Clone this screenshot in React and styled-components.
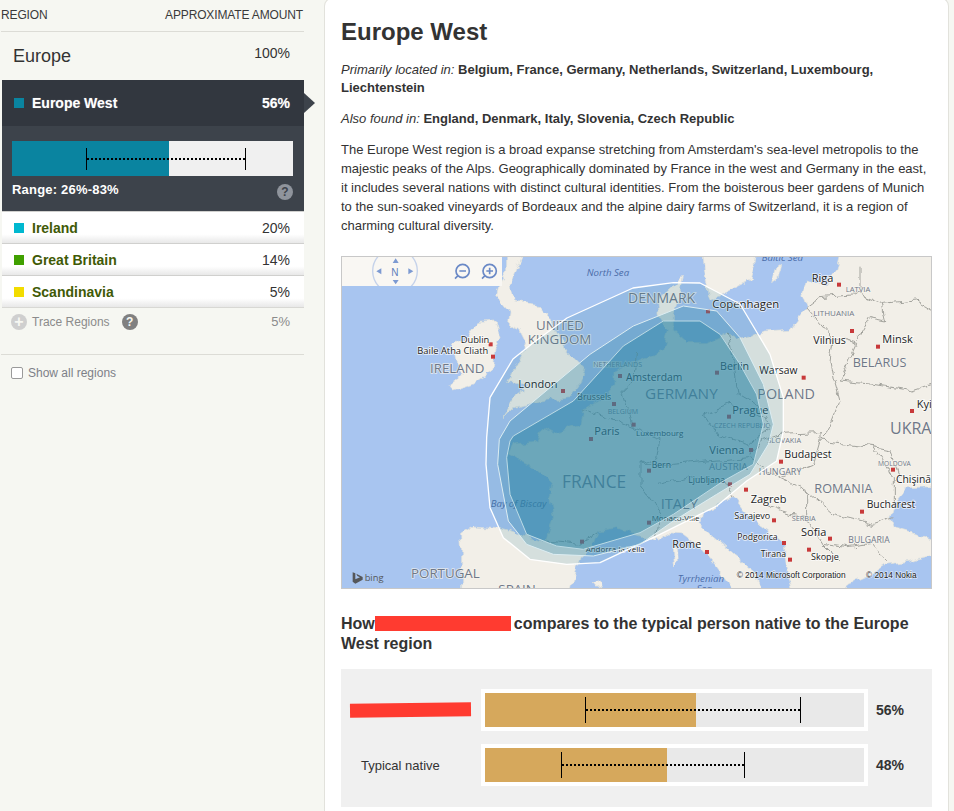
import React from 'react'
import styled, { createGlobalStyle } from 'styled-components'

const GlobalStyle = createGlobalStyle`
  html, body { margin: 0; padding: 0; height: 100%; overflow: hidden; background: #f6f7f2; }
  body { font-family: "Liberation Sans", Arial, sans-serif; color: #333; }
`

const Page = styled.div`
  display: flex;
  height: 811px;
  overflow: hidden;
`
const Sidebar = styled.aside`
  width: 303px;
  margin-left: 1px;
  flex-shrink: 0;
`
const SideHead = styled.div`
  display: flex;
  justify-content: space-between;
  height: 32px;
  box-sizing: border-box;
  padding: 8px 1px 0 0;
  font-size: 12px;
  letter-spacing: -.14px;
  color: #3a3a3a;
  border-bottom: 1px solid #dcdcd6;
`
const TopRow = styled.div`
  display: flex;
  justify-content: space-between;
  height: 48px;
  padding: 14px 14px 0 12px;
  box-sizing: border-box;
  font-size: 18px;
  color: #333;
  span:last-child { font-size: 14px; margin-top: -1px; }
`
const ActiveBlock = styled.div`
  position: relative;
  margin-left: 1px;
  background: #3d434b;
  color: #fff;
  height: 131px;
  box-sizing: border-box;
`
const ActiveHead = styled.div`
  display: flex;
  align-items: center;
  height: 46px;
  background: #32373f;
  padding: 0 14px 0 12px;
  font-size: 14px;
  font-weight: bold;
  text-shadow: 0 0 1px rgba(255, 255, 255, .4);
`
const Arrow = styled.div`
  position: absolute;
  top: 13px;
  right: -11px;
  border-left: 11px solid #3d434b;
  border-top: 10px solid transparent;
  border-bottom: 10px solid transparent;
`
const Swatch = styled.span`
  width: 10px;
  height: 10px;
  margin-right: 8px;
  flex-shrink: 0;
  background: ${p => p.$color};
`
const Name = styled.span`
  flex: 1;
`
const ActiveBody = styled.div`
  padding: 15px 11px 0 10px;
`
const Bar = styled.div`
  position: relative;
  height: ${p => p.$height}px;
  background: ${p => p.$track};
`
const BarFill = styled.div`
  height: 100%;
  background: ${p => p.$color};
`
const Whisker = styled.div`
  position: absolute;
  top: 50%;
  height: ${p => p.$tall}px;
  margin-top: -${p => p.$tall / 2}px;
  box-sizing: border-box;
  border-left: 1px solid #000;
  border-right: 1px solid #000;
  &::after {
    content: "";
    position: absolute;
    left: 0;
    right: 0;
    top: 50%;
    height: 2px;
    margin-top: -1px;
    background: repeating-linear-gradient(90deg, #000 0 2px, transparent 2px 4px);
  }
`
const RangeRow = styled.div`
  display: flex;
  justify-content: space-between;
  padding-top: 6px;
  font-size: 13px;
  letter-spacing: .2px;
  font-weight: bold;
`
const Help = styled.span`
  display: inline-flex;
  align-items: center;
  justify-content: center;
  width: 16px;
  height: 16px;
  border-radius: 50%;
  background: ${p => p.$bg};
  color: ${p => p.$fg};
  font-size: 12px;
  font-weight: bold;
  margin-top: ${p => p.$top || 0}px;
  margin-left: ${p => p.$left || 0}px;
`
const RowList = styled.div`
  margin-left: 1px;
  border-bottom: 1px solid #d8d8d4;
`
const RegionRow = styled.div`
  display: flex;
  align-items: center;
  height: 32px;
  box-sizing: border-box;
  padding: 0 14px 0 12px;
  background: linear-gradient(#fff 72%, #e8e8e8);
  border-top: 1px solid #d0d0ce;
  font-size: 14px;
`
const RegionName = styled(Name)`
  font-weight: bold;
  color: #3f5a06;
`
const TraceRow = styled.div`
  display: flex;
  align-items: center;
  height: 29px;
  padding: 0 14px 2px 10px;
  box-sizing: border-box;
  font-size: 12px;
  color: #8b8b8b;
  span:last-child { margin-left: auto; font-size: 13px; }
`
const PlusIcon = styled.span`
  display: inline-flex;
  align-items: center;
  justify-content: center;
  width: 16px;
  height: 16px;
  border-radius: 50%;
  background: #cfcfcf;
  color: #f6f7f2;
  font-size: 16px;
  font-weight: bold;
  line-height: 1;
  margin-right: 5px;
`
const Divider = styled.div`
  margin-top: 17px;
  border-top: 1px solid #dcdcd6;
`
const ShowAll = styled.label`
  display: flex;
  align-items: center;
  padding: 11px 0 0 10px;
  font-size: 12px;
  color: #7d8088;
  input { width: 12px; height: 12px; margin: 0 5px 0 0; appearance: none; background: #fff; border: 1px solid #9a9a9a; border-radius: 2px; }
`
const Main = styled.main`
  width: 625px;
  margin-left: 20px;
  flex-shrink: 0;
  box-sizing: border-box;
  padding: 0 16px;
  background: #fff;
  border: 1px solid #e2e2dc;
  border-bottom: 0;
  border-radius: 8px 8px 0 0;
  margin-top: -2px;
`
const Title = styled.h1`
  margin: 18px 0 0;
  font-size: 24px;
  line-height: 30px;
  color: #333;
`
const Para = styled.p`
  margin: ${p => p.$top}px 0 0;
  font-size: 13px;
  line-height: ${p => p.$lh || 18}px;
  color: #333;
`
const MapFrame = styled.div`
  margin-top: 21px;
  height: 333px;
  box-sizing: border-box;
  background: #a8c5f0;
  border: 1px solid #c8c8c8;
  svg { display: block; width: 100%; height: 100%; }
`
const SubHead = styled.h2`
  margin: 25px 0 0;
  font-size: 16px;
  line-height: 20px;
  color: #333;
`
const Redact = styled.span`
  display: inline-block;
  width: 136px;
  height: 15px;
  margin: 0 3px 0 0;
  vertical-align: -2px;
  background: #ff3b30;
`
const ComparePanel = styled.div`
  margin-top: 15px;
  height: 138px;
  background: #f0f0f0;
  padding: 20px 0 0 9px;
  box-sizing: border-box;
  display: grid;
  grid-template-columns: 131px 387px auto;
  grid-auto-rows: 42px;
  row-gap: 13px;
  align-items: center;
`
const PersonBar = styled.div`
  width: 121px;
  height: 14px;
  background: #ff3b30;
  transform: rotate(-.6deg);
`
const TypicalLabel = styled.div`
  font-size: 13px;
  padding-left: 11px;
`
const BarBox = styled.div`
  background: #fff;
  padding: 4px;
  height: 42px;
  box-sizing: border-box;
`
const Value = styled.div`
  font-size: 14px;
  font-weight: bold;
  padding-left: 8px;
`

const land = {
  continent: 'M365 1060 L365 900 L362 850 L400 825 L470 830 L540 850 L620 870 L628 840 L640 800 L630 740 L640 700 L600 660 L560 640 L505 612 L520 580 L590 570 L610 530 L640 545 L720 520 L730 475 L790 440 L825 400 L825 360 L930 315 L969 300 L985 240 L955 190 L950 150 L1000 105 L1030 75 L1020 130 L1000 190 L1000 240 L1040 275 L1100 275 L1160 245 L1200 270 L1230 260 L1270 240 L1350 235 L1400 170 L1385 130 L1400 90 L1460 105 L1490 60 L1510 -20 L1830 -20 L1830 705 L1700 710 L1660 760 L1650 800 L1660 830 L1730 850 L1830 880 L1830 900 L1710 930 L1640 940 L1610 960 L1520 1000 L1500 1060 L1370 1060 L1335 940 L1330 880 L1270 830 L1210 780 L1180 740 L1150 745 L1130 770 L1085 785 L1080 820 L1110 850 L1180 910 L1240 960 L1290 1060 L1210 1060 L1130 950 L1070 880 L1030 850 L990 845 L950 870 L880 850 L830 830 L775 840 L760 880 L720 920 L700 980 L680 1060 Z',
  britain: 'M500 -20 L560 -20 L510 100 L520 150 L590 160 L625 200 L650 250 L680 300 L735 355 L720 400 L690 440 L600 450 L520 470 L490 500 L530 430 L570 400 L500 395 L530 340 L560 280 L540 240 L505 225 L510 180 L470 130 L480 90 L500 60 Z',
  ireland: 'M410 215 L465 210 L480 260 L465 300 L455 360 L400 400 L340 420 L330 400 L370 370 L350 340 L340 280 L380 260 L395 235 Z',
  sweden: 'M1085 -20 L1090 60 L1110 150 L1150 130 L1230 90 L1260 -20 Z',
  gotland: 'M1310 50 L1325 40 L1312 90 L1298 95 Z',
  mallorca: 'M760 1000 L785 990 L790 1005 L770 1012 Z',
  corsica: 'M1000 890 L1012 885 L1015 930 L1003 945 Z',
}

const borders = [
  'M620 870 L720 880 L775 840',
  'M730 475 L800 500 L880 530 L960 560 L950 620 L900 640 L900 700 L960 780 L950 860',
  'M1165 245 L1180 330 L1195 430 L1280 480',
  'M1090 490 L1170 460 L1280 500 L1290 530 L1230 580 L1130 550 Z',
  'M890 300 L880 400 L850 430 L880 530',
  'M900 640 L1000 640 L1100 630 L1230 620 L1260 570',
  'M950 700 L1050 680 L1150 690 L1180 740',
  'M1400 170 L1480 260 L1470 330 L1480 380 L1500 450 L1460 550 L1440 570',
  'M1260 570 L1320 550 L1440 545 L1440 570 L1600 590 L1660 680 L1660 760',
  'M1230 620 L1320 680 L1420 640 L1440 570',
  'M1400 720 L1480 790 L1600 820 L1660 800',
  'M1400 170 L1440 140 L1560 130 L1630 160 L1640 210 L1590 200 L1550 270',
  'M1560 50 L1560 130 M1630 160 L1730 150 L1780 180',
  'M1480 260 L1550 280 L1500 390 L1600 400 L1720 420 L1780 400',
  'M1320 680 L1400 720 L1400 800 L1450 880 L1500 930',
  'M1250 750 L1330 780 L1400 800',
  'M1450 880 L1520 890 L1600 880 L1640 930',
  'M1600 590 L1650 600 L1680 680 L1660 700',
]

const outerBlob = 'M440 560 L450 440 L519 324 L580 275 L681 201 L879 111 L1000 95 L1080 96 L1200 159 L1290 310 L1330 440 L1330 540 L1310 630 L1220 690 L1130 765 L960 850 L780 935 L680 940 L570 925 L490 860 L450 770 L438 640 Z'
const midBlob = 'M478 565 L510 510 L750 310 L880 225 L1030 165 L1130 180 L1200 260 L1270 400 L1300 520 L1285 580 L1230 670 L1130 730 L1000 810 L900 880 L760 915 L640 910 L560 880 L505 810 L473 640 Z'
const innerBlob = 'M510 570 L520 555 L700 450 L850 285 L970 210 L1080 210 L1140 250 L1200 340 L1250 430 L1270 520 L1240 640 L1150 690 L1000 790 L900 845 L730 895 L650 885 L560 850 L510 730 L500 620 Z'

const cities = [
  [669, 420], [452, 280], [459, 317], [753, 564], [822, 459], [881, 521], [840, 375],
  [1104, 181], [1497, 101], [1536, 240], [1614, 287], [1131, 365], [1391, 380], [1167, 497],
  [1233, 597], [1323, 632], [1659, 656], [1716, 480], [1218, 716], [1566, 782], [927, 659],
  [927, 815], [1302, 808], [1470, 863], [1332, 876], [1350, 926], [1407, 896], [1101, 903],
  [1170, 700], [726, 872],
]

// x, y, text, size, kind: c = city, r = region, s = sea
const labels = [
  [740, 75, 'North Sea', 29, 's'],
  [588, 237, 'UNITED', 40, 'r'],
  [563, 278, 'KINGDOM', 40, 'r'],
  [362, 276, 'Dublin', 28, 'c'],
  [232, 308, 'Baile Atha Cliath', 28, 'c'],
  [270, 365, 'IRELAND', 40, 'r'],
  [535, 410, 'London', 33, 'c'],
  [712, 448, 'Brussels', 26, 'c'],
  [760, 347, 'NETHERLANDS', 21, 'r'],
  [803, 490, 'BELGIUM', 21, 'r'],
  [763, 553, 'Paris', 33, 'c'],
  [666, 710, 'FRANCE', 52, 'r'],
  [452, 767, 'Bay of Biscay', 29, 's'],
  [213, 982, 'PORTUGAL', 40, 'r'],
  [475, 1030, 'SPAIN', 40, 'r'],
  [737, 903, 'Andorra la Vella', 24, 'c'],
  [1265, 30, 'Baltic Sea', 29, 's'],
  [864, 155, 'DENMARK', 42, 'r'],
  [1117, 170, 'Copenhagen', 34, 'c'],
  [1415, 92, 'Riga', 33, 'c'],
  [1517, 122, 'LATVIA', 23, 'r'],
  [1420, 196, 'LITHUANIA', 24, 'r'],
  [1420, 278, 'Vilnius', 32, 'c'],
  [1627, 277, 'Minsk', 33, 'c'],
  [1538, 347, 'BELARUS', 38, 'r'],
  [1140, 357, 'Berlin', 32, 'c'],
  [1258, 368, 'Warsaw', 31, 'c'],
  [858, 390, 'Amsterdam', 31, 'c'],
  [915, 445, 'GERMANY', 46, 'r'],
  [1252, 445, 'POLAND', 43, 'r'],
  [1177, 488, 'Prague', 33, 'c'],
  [1122, 532, 'CZECH REPUBLIC', 21, 'r'],
  [1282, 575, 'SLOVAKIA', 22, 'r'],
  [888, 555, 'Luxembourg', 24, 'c'],
  [1108, 610, 'Vienna', 33, 'c'],
  [1333, 620, 'Budapest', 32, 'c'],
  [1107, 657, 'AUSTRIA', 29, 'r'],
  [1256, 673, 'HUNGARY', 27, 'r'],
  [1614, 645, 'MOLDOVA', 20, 'r'],
  [1668, 695, 'Chişinău', 31, 'c'],
  [935, 652, 'Bern', 26, 'c'],
  [1045, 695, 'Ljubljana', 26, 'c'],
  [1423, 725, 'ROMANIA', 38, 'r'],
  [1232, 755, 'Zagreb', 33, 'c'],
  [962, 775, 'ITALY', 44, 'r'],
  [1580, 770, 'Bucharest', 31, 'c'],
  [935, 810, 'Monaco-Ville', 24, 'c'],
  [1183, 805, 'Sarajevo', 27, 'c'],
  [1355, 810, 'SERBIA', 22, 'r'],
  [1383, 855, 'Sofia', 33, 'c'],
  [1192, 868, 'Podgorica', 26, 'c'],
  [1525, 875, 'BULGARIA', 26, 'r'],
  [997, 890, 'Rome', 32, 'c'],
  [1262, 917, 'Tirana', 26, 'c'],
  [1413, 928, 'Skopje', 27, 'c'],
  [1730, 470, 'Kyiv', 33, 'c'],
  [1650, 548, 'UKRAINE', 48, 'r'],
  [1013, 992, 'Tyrrhenian', 29, 's'],
  [1070, 1022, 'Sea', 29, 's'],
]

const labelStyle = {
  c: { fill: '#222', stroke: '#fff', fontStyle: 'normal' },
  r: { fill: '#6f7888', stroke: '#f6f4ee', fontStyle: 'normal' },
  s: { fill: '#4a6ca8', stroke: 'none', fontStyle: 'italic' },
}

const MapText = ({ x, y, size, kind, children }) => (
  <text
    x={x}
    y={y}
    fontSize={size}
    fontFamily='"Open Sans", "Noto Sans", sans-serif'
    strokeWidth={kind === 's' ? 0 : 5}
    strokeOpacity={0.75}
    paintOrder="stroke"
    {...labelStyle[kind]}
  >
    {children}
  </text>
)

const EuropeMap = () => (
  <svg viewBox="6 18 1767 993" preserveAspectRatio="none">
    <defs>
      <filter id="rough" filterUnits="userSpaceOnUse" x="-40" y="-40" width="1880" height="1120" colorInterpolationFilters="sRGB">
        <feTurbulence type="fractalNoise" baseFrequency=".028" numOctaves="3" seed="7" />
        <feDisplacementMap in="SourceGraphic" scale="26" xChannelSelector="R" yChannelSelector="G" />
      </filter>
      <clipPath id="controls">
        <rect x="3" y="15" width="483" height="90" />
      </clipPath>
    </defs>
    <rect x="0" y="0" width="1800" height="1040" fill="#a8c5f0" />
    <g filter="url(#rough)">
      {Object.keys(land).map(k => (
        <path key={k} d={land[k]} fill="#f2efe8" stroke="#e3e2da" strokeWidth="2" />
      ))}
      {borders.map((d, i) => (
        <path key={i} d={d} fill="none" stroke="#a3a39d" strokeWidth="3" />
      ))}
    </g>
    {cities.map(([x, y], i) => (
      <rect key={i} x={x - 6} y={y - 6} width="12" height="12" fill="#c8393a" />
    ))}
    {labels.map(([x, y, text, size, kind]) => (
      <MapText key={text} x={x} y={y} size={size} kind={kind}>{text}</MapText>
    ))}

    <path d={outerBlob} fill="#2c84a4" fillOpacity=".15" stroke="#fff" strokeWidth="4" strokeLinejoin="round" />
    <path d={midBlob} fill="#2c84a4" fillOpacity=".3" stroke="#dcedf2" strokeWidth="3" strokeLinejoin="round" />
    <path d={innerBlob} fill="#2c84a4" fillOpacity=".45" stroke="#bcdbe5" strokeWidth="3" strokeLinejoin="round" />

    <rect x="3" y="15" width="483" height="90" fill="#f9f7f3" />
    <circle cx="165" cy="60" r="67" fill="none" stroke="#c5d2ea" strokeWidth="4" clipPath="url(#controls)" />
    <path d="M167 22 L176 36 L158 36 Z M167 100 L176 87 L158 87 Z M109 61 L124 52 L124 70 Z M220 61 L205 52 L205 70 Z" fill="#7d9ad2" />
    <text x="154" y="74" fontSize="30" fill="#5f7fbd" fontFamily='"Liberation Sans", sans-serif'>N</text>
    <g fill="none" stroke="#6a89c6" strokeWidth="5">
      <circle cx="368" cy="60" r="20" />
      <path d="M354 74 L345 83 M358 60 L378 60" />
      <circle cx="449" cy="60" r="20" />
      <path d="M435 74 L426 83 M439 60 L459 60 M449 50 L449 70" />
    </g>

    <path d="M38 964 L46 967 L46 985 L60 979 L52 975 L49 968 L68 978 L68 986 L46 998 L38 992 Z" fill="#55575a" />
    <text x="74" y="990" fontSize="28" fill="#55575a" fontFamily='"Open Sans", sans-serif'>bing</text>
    <text x="1190" y="980" fontSize="25" fill="#222" stroke="#fff" strokeWidth="4" strokeOpacity=".6" paintOrder="stroke" fontFamily='"Liberation Sans", sans-serif'>© 2014 Microsoft Corporation</text>
    <text x="1578" y="980" fontSize="25" fill="#222" stroke="#fff" strokeWidth="4" strokeOpacity=".6" paintOrder="stroke" fontFamily='"Liberation Sans", sans-serif'>© 2014 Nokia</text>
  </svg>
)

const RangeBar = ({ pct, low, high, height, track, color, tall }) => (
  <Bar $height={height} $track={track}>
    <BarFill $color={color} style={{ width: `${pct}%` }} />
    <Whisker $tall={tall} style={{ left: `${low}%`, width: `${high - low}%` }} />
  </Bar>
)

const regions = [
  { name: 'Ireland', pct: '20%', color: '#00b8d0' },
  { name: 'Great Britain', pct: '14%', color: '#40a000' },
  { name: 'Scandinavia', pct: '5%', color: '#f2dc00' },
]

export default function App() {
  return (
    <Page>
      <GlobalStyle />
      <Sidebar>
        <SideHead>
          <span>REGION</span>
          <span>APPROXIMATE AMOUNT</span>
        </SideHead>
        <TopRow>
          <span>Europe</span>
          <span>100%</span>
        </TopRow>
        <ActiveBlock>
          <ActiveHead>
            <Swatch $color="#0a84a0" />
            <Name>Europe West</Name>
            <span>56%</span>
          </ActiveHead>
          <Arrow />
          <ActiveBody>
            <RangeBar pct={55.8} low={26.3} high={83.3} height={35} track="#f0f0f0" color="#0a84a0" tall={22} />
            <RangeRow>
              <span>Range: 26%-83%</span>
              <Help $bg="#8f949c" $fg="#3d434b" $top={2}>?</Help>
            </RangeRow>
          </ActiveBody>
        </ActiveBlock>
        <RowList>
          {regions.map(r => (
            <RegionRow key={r.name}>
              <Swatch $color={r.color} />
              <RegionName>{r.name}</RegionName>
              <span>{r.pct}</span>
            </RegionRow>
          ))}
        </RowList>
        <TraceRow>
          <PlusIcon>+</PlusIcon>
          Trace Regions
          <Help $bg="#808080" $fg="#f6f7f2" $left={12}>?</Help>
          <span>5%</span>
        </TraceRow>
        <Divider />
        <ShowAll>
          <input type="checkbox" />
          Show all regions
        </ShowAll>
      </Sidebar>

      <Main>
        <Title>Europe West</Title>
        <Para $top={14}>
          <em>Primarily located in:</em> <b>Belgium, France, Germany, Netherlands, Switzerland, Luxembourg, Liechtenstein</b>
        </Para>
        <Para $top={13}>
          <em>Also found in:</em> <b>England, Denmark, Italy, Slovenia, Czech Republic</b>
        </Para>
        <Para $top={12} $lh={19}>
          The Europe West region is a broad expanse stretching from Amsterdam's sea-level metropolis to the majestic peaks of the Alps. Geographically dominated by France in the west and Germany in the east, it includes several nations with distinct cultural identities. From the boisterous beer gardens of Munich to the sun-soaked vineyards of Bordeaux and the alpine dairy farms of Switzerland, it is a region of charming cultural diversity.
        </Para>
        <MapFrame>
          <EuropeMap />
        </MapFrame>
        <SubHead>
          How<Redact />compares to the typical person native to the Europe West region
        </SubHead>
        <ComparePanel>
          <PersonBar />
          <BarBox>
            <RangeBar pct={55.8} low={26.4} high={83.4} height={34} track="#e9e9e9" color="#d6a85c" tall={26} />
          </BarBox>
          <Value>56%</Value>
          <TypicalLabel>Typical native</TypicalLabel>
          <BarBox>
            <RangeBar pct={48} low={20} high={68.5} height={34} track="#e9e9e9" color="#d6a85c" tall={26} />
          </BarBox>
          <Value>48%</Value>
        </ComparePanel>
      </Main>
    </Page>
  )
}
